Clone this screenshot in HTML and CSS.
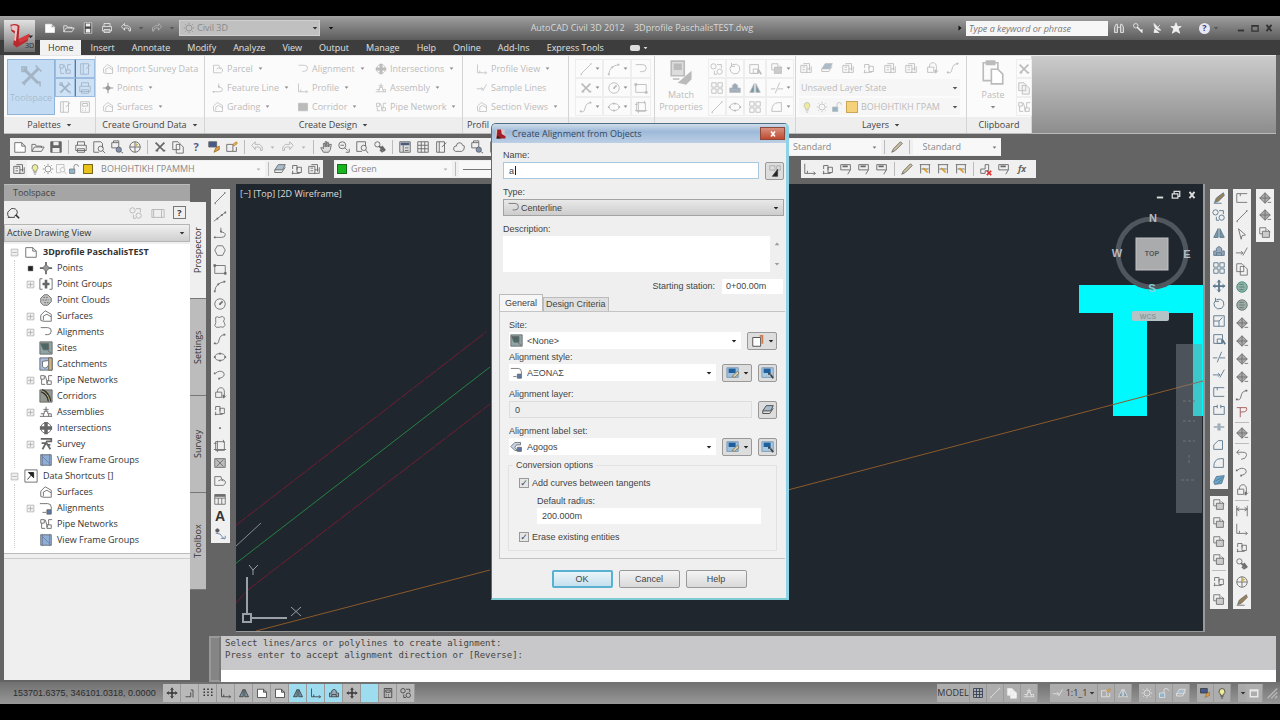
FILE: index.html
```html
<!DOCTYPE html>
<html lang="en">
<head>
<meta charset="utf-8">
<title>AutoCAD Civil 3D 2012</title>
<link rel="stylesheet" href="styles.css">
</head>
<body>
<svg class="sprite" aria-hidden="true">
  <symbol id="new" viewBox="0 0 16 16"><path d="M2 3h8l4 4v7H2zM10 3v4h4" fill="#fff"/></symbol>
  <symbol id="open" viewBox="0 0 16 16"><path d="M1 13V5h4l1 2h6v2M1 13l3-5h11l-3 5z"/></symbol>
  <symbol id="save" viewBox="0 0 16 16"><path d="M2 2h12v12H2z" fill="currentColor"/><path d="M5 2h6v4H5zM4 9h8v5H4z" fill="#eee" stroke="none"/></symbol>
  <symbol id="qsave" viewBox="0 0 16 16"><path d="M3 1h10v14H3z" fill="#444" stroke="#ddd"/><path d="M5 2h6v4H5zM5 9h6v5H5z" fill="#eee" stroke="none"/></symbol>
  <symbol id="print" viewBox="0 0 16 16"><path d="M4 6V2h8v4M2 6h12v6H2zM4 10h8v4H4z"/></symbol>
  <symbol id="preview" viewBox="0 0 16 16"><path d="M2 2h8l2 2v5M2 2v12h6"/><circle cx="10" cy="10" r="3"/><path d="M12 12l3 3"/></symbol>
  <symbol id="publish" viewBox="0 0 16 16"><path d="M2 3h8v6H2zM4 3V1h6v2"/><circle cx="10" cy="11" r="3" fill="#7f93b5"/><path d="M12 13l3 2"/></symbol>
  <symbol id="globe" viewBox="0 0 16 16"><circle cx="8" cy="8" r="6"/><path d="M8 2v12M2 8h12"/><path d="M8 8V3l4 2z" fill="#c9b45c" stroke="none"/></symbol>
  <symbol id="cut" viewBox="0 0 16 16"><path d="M3 3l9 9M13 3l-9 9M3 12h3M11 12h3" stroke-width="2"/></symbol>
  <symbol id="copy" viewBox="0 0 16 16"><path d="M2 2h6l2 2v7H2zM6 5h5l3 3v7H6z" fill="#f4f4f4"/></symbol>
  <symbol id="brush" viewBox="0 0 16 16"><path d="M2 2h9v6H2z" fill="#44598c"/><path d="M8 14l2-5 4-2v4z" fill="#d6a04b" stroke="#a5702c"/></symbol>
  <symbol id="edit" viewBox="0 0 16 16"><path d="M2 5h7v8H2zM9 13h4V8"/><path d="M9 5l4-3 1 2-4 3z" fill="#e3b450" stroke="#b98535"/></symbol>
  <symbol id="undo" viewBox="0 0 16 16"><path d="M2 6l4-4v3h5l3 3v4h-2V9l-2-1H6v3z"/></symbol>
  <symbol id="redo" viewBox="0 0 16 16"><path d="M14 6l-4-4v3H5L2 8v4h2V9l2-1h4v3z"/></symbol>
  <symbol id="hand" viewBox="0 0 16 16"><path d="M5 14L2 9l1-1 2 2V4h2v4-6h2v6-5h2v5l1-3h2l-1 6-2 3z" fill="#ddd"/></symbol>
  <symbol id="zoom" viewBox="0 0 16 16"><circle cx="6" cy="6" r="4"/><path d="M9 9l3 3M10 14h4v-4M4 6h4"/></symbol>
  <symbol id="zoomwin" viewBox="0 0 16 16"><path d="M8 13H2V2h10v5"/><circle cx="10" cy="9" r="3"/><path d="M12 11l3 4"/></symbol>
  <symbol id="find" viewBox="0 0 16 16"><path d="M4 13q-3-2-2-6l4-4q6-1 7 4 0 4-4 5M2 13h8"/><path d="M11 10l4 4" stroke-width="2"/></symbol>
  <symbol id="zoomprev" viewBox="0 0 16 16"><circle cx="5" cy="5" r="3"/><path d="M7 7l6 6M10 7l4 5M8 11l3 3" stroke-width="2"/></symbol>
  <symbol id="palette" viewBox="0 0 16 16"><path d="M2 2h12v12H2z" fill="#ddd"/><path d="M3 3h10v3H3z" fill="#4b5b7c" stroke="none"/><path d="M6 6v8M8 9h4M8 12h4"/></symbol>
  <symbol id="panel" viewBox="0 0 16 16"><path d="M1 4h14v9H1zM3 4v9M12 4v9"/></symbol>
  <symbol id="grid" viewBox="0 0 16 16"><path d="M2 2h12v12H2zM2 6h12M2 10h12M6 2v12M10 2v12"/></symbol>
  <symbol id="book" viewBox="0 0 16 16"><path d="M3 2h9v12H3zM6 2v12M9 8l5-5"/></symbol>
  <symbol id="cloud" viewBox="0 0 16 16"><path d="M4 13q-3-1-2-4 1-3 3-2 0-4 4-4 3 1 3 3 3 0 2 3 0 3-3 4z"/></symbol>
  <symbol id="revcloud" viewBox="0 0 16 16"><path d="M3 5q-1-3 2-3 2 2 4 0 4-1 4 3-2 2 0 4 2 4-2 5-2-1-4 0-4 1-5-2 2-3 1-7z"/></symbol>
  <symbol id="calc" viewBox="0 0 16 16"><path d="M3 2h10v12H3zM5 4h6v3H5zM5 10h1M8 10h1M11 10h0M5 12h1M8 12h1"/></symbol>
  <symbol id="layers" viewBox="0 0 16 16"><path d="M2 5h7v8H2zM5 3h7v8M8 13h6V6M9 9h4M4 7h3M4 10h3"/></symbol>
  <symbol id="bulb" viewBox="0 0 16 16"><path d="M6 11q0-2-2-4 0-5 4-5t4 5q-2 2-2 4z" fill="#eeeb9a"/><path d="M6 13h4M7 15h2"/></symbol>
  <symbol id="sun" viewBox="0 0 16 16"><circle cx="8" cy="8" r="4"/><path d="M8 1v2M8 13v2M1 8h2M13 8h2M3 3l1 1M12 12l1 1M13 3l-1 1M3 13l1-1"/></symbol>
  <symbol id="lock" viewBox="0 0 16 16"><path d="M2 8h7v6H2z" fill="#8fb4cc"/><path d="M8 8V4q0-2 3-2t3 3"/></symbol>
  <symbol id="layerset" viewBox="0 0 16 16"><path d="M2 9l4-6h8l-3 6z" fill="#a8bccb"/><path d="M2 12h8l4-6M2 9v3"/></symbol>
  <symbol id="line" viewBox="0 0 16 16"><path d="M2 14L14 2"/><path d="M2 14h1M13 2h1" stroke-width="2"/></symbol>
  <symbol id="xline" viewBox="0 0 16 16"><path d="M1 14L15 3"/><path d="M4 11h2M9 7h2M13 4h2" stroke-width="2"/></symbol>
  <symbol id="pline" viewBox="0 0 16 16"><path d="M2 13h8q4 0 4-3t-5-3M9 2v5"/><path d="M2 12v2M8 6h2" stroke-width="2"/></symbol>
  <symbol id="polygon" viewBox="0 0 16 16"><path d="M5 2h6l3 5-3 6H5L2 7z"/></symbol>
  <symbol id="rect" viewBox="0 0 16 16"><path d="M2 4h12v9H2z"/><path d="M1 3h2v2H1zM13 12h2v2h-2z" fill="currentColor"/></symbol>
  <symbol id="arc" viewBox="0 0 16 16"><path d="M2 14q1-10 12-11"/><path d="M2 13v2M5 6h2M12 3h2" stroke-width="2"/></symbol>
  <symbol id="circle" viewBox="0 0 16 16"><circle cx="8" cy="8" r="6"/><path d="M8 8l3-3M7 8h2" stroke-width="2"/></symbol>
  <symbol id="spline" viewBox="0 0 16 16"><path d="M2 13q4 2 5-4t7-6"/><path d="M2 12v2M12 3h2" stroke-width="2"/></symbol>
  <symbol id="ellipse" viewBox="0 0 16 16"><ellipse cx="8" cy="8" rx="6" ry="4"/><path d="M8 3v2M1 8h2M13 8h2M8 11v2" stroke-width="2"/></symbol>
  <symbol id="earc" viewBox="0 0 16 16"><path d="M3 6q4-4 9-1 3 5-5 7"/><path d="M2 5v2M7 11v2" stroke-width="2"/></symbol>
  <symbol id="insert" viewBox="0 0 16 16"><path d="M3 7h7v6H3zM5 7q0-5 4-5t4 5v6l2-2"/><path d="M12 10v4" stroke-width="2"/></symbol>
  <symbol id="block" viewBox="0 0 16 16"><path d="M3 8V4h5v5M8 6h5v6H8zM2 13h9M3 10v4"/></symbol>
  <symbol id="dot" viewBox="0 0 16 16"><path d="M7 8h2" stroke-width="2"/></symbol>
  <symbol id="hatch" viewBox="0 0 16 16"><path d="M3 3h10v10H3zM1 5h3M12 1v3M1 12h14M5 15V2"/></symbol>
  <symbol id="gradient" viewBox="0 0 16 16"><path d="M2 3h12v10H2z" fill="#bbb"/><path d="M4 4l8 8M12 4l-8 8"/></symbol>
  <symbol id="region" viewBox="0 0 16 16"><path d="M2 13V3h7l1 3q5 1 4 5-2 3-5 2zM6 8q3-3 6 0"/></symbol>
  <symbol id="table" viewBox="0 0 16 16"><path d="M2 3h12v11H2zM2 7h12M6 7v7M10 7v7"/><path d="M2 4h12" stroke-width="3"/></symbol>
  <symbol id="addsel" viewBox="0 0 16 16"><circle cx="5" cy="4" r="2" fill="#555"/><path d="M3 7l5 1M8 8l5 6M9 13h5v-3" stroke="#647da7"/></symbol>
  <symbol id="erase" viewBox="0 0 16 16"><path d="M3 13l2-5 8-6 1 3-7 7z" fill="#9a8055"/><path d="M2 14h9"/></symbol>
  <symbol id="copyobj" viewBox="0 0 16 16"><circle cx="4" cy="5" r="3"/><circle cx="11" cy="11" r="3"/><path d="M8 3h5v4M5 10v4h3"/></symbol>
  <symbol id="mirror" viewBox="0 0 16 16"><path d="M7 3v10H2zM9 3v10h5z" fill="#7898a8"/></symbol>
  <symbol id="offset" viewBox="0 0 16 16"><path d="M2 13V8h3V5q3-4 6 0v3h3v5zM5 13v-3h6v3" fill="#9ab"/></symbol>
  <symbol id="array" viewBox="0 0 16 16"><path d="M2 2h5v5H2zM9 2h5v5H9zM2 9h5v5H2zM9 9h5v5H9z"/></symbol>
  <symbol id="move" viewBox="0 0 16 16"><path d="M8 2v12M2 8h12" stroke-width="2"/><path d="M6 4l2-3 2 3M6 12l2 3 2-3M4 6L1 8l3 2M12 6l3 2-3 2"/></symbol>
  <symbol id="rotate" viewBox="0 0 16 16"><path d="M5 3q5-2 8 2 2 5-2 8-5 2-8-2-2-4 1-7"/><path d="M4 1v4h4"/></symbol>
  <symbol id="scale" viewBox="0 0 16 16"><path d="M2 2h12v12H2zM2 8h6v6M8 8l4-4"/></symbol>
  <symbol id="stretch" viewBox="0 0 16 16"><path d="M2 3h10v10H2zM6 8h5v5H6z"/><path d="M12 9l3 5" stroke-width="2"/></symbol>
  <symbol id="trim" viewBox="0 0 16 16"><path d="M1 9h5M9 9h6M6 14l5-12"/></symbol>
  <symbol id="extend" viewBox="0 0 16 16"><path d="M1 9h8M9 12l5-9M7 7l2 2-2 2"/></symbol>
  <symbol id="break" viewBox="0 0 16 16"><path d="M14 3H2v10h12M6 3v3"/></symbol>
  <symbol id="break2" viewBox="0 0 16 16"><path d="M6 4H2v9h12V4h-4M6 2v4M10 2v4"/></symbol>
  <symbol id="join" viewBox="0 0 16 16"><path d="M2 8h4M10 8h4M7 4v8M9 4v8"/></symbol>
  <symbol id="chamfer" viewBox="0 0 16 16"><path d="M2 13V8l5-5h5v10z"/></symbol>
  <symbol id="fillet" viewBox="0 0 16 16"><path d="M2 13q0-10 8-10h3v10z"/></symbol>
  <symbol id="explode" viewBox="0 0 16 16"><path d="M2 10l3-6 9-1-3 9-8 1z" fill="#69a9cc"/><path d="M4 9l8-4M6 12l6-5"/></symbol>
  <symbol id="order" viewBox="0 0 16 16"><path d="M2 2h7v7H2z"/><path d="M5 6h8v7H5z" fill="#ccc"/><path d="M11 4l3 3"/></symbol>
  <symbol id="pointer" viewBox="0 0 16 16"><path d="M4 2l8 7-4 1-1 4z"/></symbol>
  <symbol id="gem" viewBox="0 0 16 16"><path d="M8 2l6 6-6 6-6-6z" fill="#aaa"/><path d="M8 2v12M2 8h12M11 13h4"/></symbol>
  <symbol id="ball" viewBox="0 0 16 16"><circle cx="8" cy="8" r="6" fill="#9aaea8"/><path d="M5 5h5M5 8h6M5 11h5"/></symbol>
  <symbol id="ptcloud" viewBox="0 0 16 16"><path d="M2 11V6l4-4h4l4 4v4l-4 4H5z" fill="#c4c4c4"/><path d="M5 5h5M4 8h7M6 11h5" stroke-dasharray="2 1"/></symbol>
  <symbol id="hook" viewBox="0 0 16 16"><path d="M5 3L2 6l3 3M2 6h7q5 0 4 4t-6 4"/></symbol>
  <symbol id="pflag" viewBox="0 0 16 16"><path d="M2 3h11q2 5-5 5H6M6 3v11"/></symbol>
  <symbol id="snap" viewBox="0 0 16 16"><path d="M2 13h7V7M12 14V4h-3"/></symbol>
  <symbol id="dotgrid" viewBox="0 0 16 16"><path d="M2 3h12M2 7h12M2 11h12" stroke-dasharray="2 3" stroke-width="2"/></symbol>
  <symbol id="dim" viewBox="0 0 16 16"><path d="M2 2v12M14 2v12M2 6h12M5 4L2 6l3 2M11 4l3 2-3 2"/></symbol>
  <symbol id="dimcorner" viewBox="0 0 16 16"><path d="M2 2v11h12M5 10v3M12 11l2 2-2 2"/></symbol>
  <symbol id="flagdim" viewBox="0 0 16 16"><path d="M2 3h11v6H2zM13 9l-3 5"/><path d="M4 5h6" stroke-width="2"/></symbol>
  <symbol id="gold" viewBox="0 0 16 16"><path d="M2 3h12M3 3v10M13 3v10M4 8h8"/><path d="M6 7l5 5" stroke="#d99d25" stroke-width="2"/></symbol>
  <symbol id="redx" viewBox="0 0 16 16"><path d="M2 13V8h5V3h4v7H7v3z"/><path d="M9 10l5 5M14 10l-5 5" stroke="#d33" stroke-width="2"/></symbol>
  <symbol id="points" viewBox="0 0 16 16"><path d="M8 1v14M1 8h14" stroke-width="2"/><path d="M8 4l4 4-4 4-4-4z" fill="#999"/></symbol>
  <symbol id="pgroups" viewBox="0 0 16 16"><path d="M4 2H1v12h3M12 2h3v12h-3"/><path d="M8 3v10M4 8h8" stroke-width="3"/></symbol>
  <symbol id="surface" viewBox="0 0 16 16"><path d="M2 13V7l5-5 7 4v8H5zM5 13V8l4-2 5 3"/></symbol>
  <symbol id="align" viewBox="0 0 16 16"><path d="M2 3h8q4 0 4 4t-4 4H7"/></symbol>
  <symbol id="site" viewBox="0 0 16 16"><path d="M1 1h14v14H1z" fill="#8fa4a5"/><path d="M2 3h9v7H5zM10 11l4 3" fill="#4d6767"/></symbol>
  <symbol id="catch" viewBox="0 0 16 16"><path d="M1 1h14v14H1z" fill="#a9bee2"/><path d="M11 1h4v14h-4z" fill="#d2b578"/><path d="M4 5v6q4 4 7-2V4z" fill="#fff"/></symbol>
  <symbol id="pipe" viewBox="0 0 16 16"><path d="M2 3h4v4H2zM3 7v6h4M9 13h5V9H9zM11 9V3h4M7 3l3 9"/></symbol>
  <symbol id="corridor" viewBox="0 0 16 16"><path d="M1 1h14v14H1z" fill="#93998f"/><path d="M3 2q8 3 9 12" stroke="#333" stroke-width="4"/><path d="M3 2q8 3 9 12" stroke="#dcd58a"/></symbol>
  <symbol id="assembly" viewBox="0 0 16 16"><path d="M1 13h14M2 10h4V7h4v3h4v3M8 2v6M5 5h6M5 10v3M11 10v3"/></symbol>
  <symbol id="intersect" viewBox="0 0 16 16"><circle cx="8" cy="8" r="6"/><path d="M8 1v14M1 8h14" stroke-width="4"/></symbol>
  <symbol id="survey" viewBox="0 0 16 16"><path d="M2 2h12v3H9L4 14M8 6l5 8M3 7h5M9 9h4" stroke-width="2"/></symbol>
  <symbol id="vframe" viewBox="0 0 16 16"><path d="M2 2h12v12H2z" fill="#8faed6"/><path d="M2 2l12 12M4 1v14M12 1v14" stroke="#6d84a8"/></symbol>
  <symbol id="shortcut" viewBox="0 0 16 16"><path d="M1 1h14v14H1z" fill="#fff"/><path d="M5 4h6v6zM4 12l5-6" fill="#222" stroke="#222"/></symbol>
  <symbol id="down" viewBox="0 0 16 16"><path d="M2 5h12l-6 7z" fill="currentColor" stroke="none"/></symbol>
  <symbol id="up" viewBox="0 0 16 16"><path d="M2 11h12L8 4z" fill="currentColor" stroke="none"/></symbol>
  <symbol id="right" viewBox="0 0 16 16"><path d="M4 1v14l8-7z" fill="currentColor" stroke="none"/></symbol>
  <symbol id="plus" viewBox="0 0 16 16"><path d="M2 2h12v12H2z" fill="#eee"/><path d="M4 8h8M8 4v8"/></symbol>
  <symbol id="minus" viewBox="0 0 16 16"><path d="M2 2h12v12H2z" fill="#eee"/><path d="M4 8h8"/></symbol>
  <symbol id="stop" viewBox="0 0 16 16"><path d="M4 4h8v8H4z" fill="#222" stroke="#222"/></symbol>
  <symbol id="binoc" viewBox="0 0 16 16"><path d="M2 14V7l2-4h2v11zM10 14V3h2l2 4v7zM6 7h4" fill="#999"/></symbol>
  <symbol id="key" viewBox="0 0 16 16"><circle cx="5" cy="5" r="3"/><path d="M7 7l7 7M12 12l2-2" stroke-width="2"/></symbol>
  <symbol id="dish" viewBox="0 0 16 16"><path d="M4 2q0 9 9 9zM9 7l3-3M5 9l-1 5h7" fill="currentColor"/></symbol>
  <symbol id="star" viewBox="0 0 16 16"><path d="M8 1l2 5h5l-4 3 2 6-5-3-5 3 2-6-4-3h5z" fill="currentColor"/></symbol>
  <symbol id="min" viewBox="0 0 16 16"><path d="M3 12h10" stroke-width="3"/></symbol>
  <symbol id="max" viewBox="0 0 16 16"><path d="M3 4h10v9H3zM3 5h10" stroke-width="2"/></symbol>
  <symbol id="restore" viewBox="0 0 16 16"><path d="M5 5V2h9v8h-3M2 6h9v7H2z" stroke-width="2"/></symbol>
  <symbol id="close" viewBox="0 0 16 16"><path d="M4 3l8 10M12 3L4 13" stroke-width="3"/></symbol>
  <symbol id="tools" viewBox="0 0 16 16"><path d="M3 3l10 10M13 3L3 13" stroke-width="2"/><path d="M2 2h3v3H2zM11 1l4 4M2 12l2 2M11 12h3v3"/></symbol>
  <symbol id="match" viewBox="0 0 16 16"><path d="M2 1h8v9H2z" fill="#ddd"/><path d="M4 3h4v3H4zM3 12h4M7 14l7-6v4l-3 3z" fill="#bbb"/></symbol>
  <symbol id="paste" viewBox="0 0 16 16"><path d="M2 2h9v11H2zM4 1h5v2H4z"/><path d="M7 6h4l3 3v6H7z" fill="#fff"/></symbol>
  <symbol id="stylebtn" viewBox="0 0 16 16"><path d="M1 2h13v11H1z" fill="#9dc0dd" stroke="#7895b2"/><path d="M3 3h8v5H3z" fill="#1f5f9e" stroke="none"/><path d="M7 12l6-6 2 2-5 5z" fill="#e3cf9a" stroke="#777"/></symbol>
  <symbol id="stylepick" viewBox="0 0 16 16"><path d="M1 2h13v11H1z" fill="#a7c9e2" stroke="#7895b2"/><path d="M3 3h8v5H3z" fill="#1f5f9e" stroke="none"/><path d="M8 9h3M11 10l3 4" stroke-width="2"/></symbol>
  <symbol id="newsite" viewBox="0 0 16 16"><path d="M2 4h9v10H2z" fill="#fff"/><path d="M10 2h3v7M13 9v2" stroke="#d07a48" stroke-width="2"/></symbol>
  <symbol id="namepick" viewBox="0 0 16 16"><path d="M2 2h6v5H2zM10 2h4v5h-4z" stroke="#aaa"/><path d="M5 14l6-8v8z" fill="#222"/></symbol>
  <symbol id="labelset" viewBox="0 0 16 16"><path d="M1 8l5-5h7v3H8l-2 3 3 4H6z" fill="#c5d4e6"/><path d="M9 9h5v5H9z" fill="#5a77a8"/></symbol>
  <symbol id="alignstyle" viewBox="0 0 16 16"><path d="M1 3h9q4 0 4 4v3M4 13h4"/><path d="M9 10h5v5H9z" fill="#5a77a8"/></symbol>
  <symbol id="pencil" viewBox="0 0 16 16"><path d="M2 14l2-4 8-8 2 2-8 8z" fill="#cdbf9a"/></symbol>
  <symbol id="resize" viewBox="0 0 16 16"><path d="M2 15L15 2M7 15l8-8M12 15l3-3" stroke-width="2"/></symbol>
</svg>

<main class="app">
  <header class="head">
    <button class="appbtn" aria-label="Application menu">
      <svg class="logo" viewBox="0 0 32 32"><path d="M6 3q7-2 10 1l-1 15 12-6-2 8-12 7-4-3 2-12-4-3z" fill="#b92a2e"/><path d="M7 4q5-1 7 1l-2 16-2-1 1-10-4-2z" fill="#e9c6c6"/><path d="M15 19l12-6-2 6-9 4z" fill="#d7373b"/><path d="M26 15h5l-3 3z" fill="#222"/><text x="22" y="29">3D</text></svg>
    </button>
    <div class="titlebar">
      <div class="quick">
        <button aria-label="New"><svg><use href="#new"/></svg></button>
        <button aria-label="Open"><svg><use href="#open"/></svg></button>
        <button aria-label="Save"><svg><use href="#qsave"/></svg></button>
        <button aria-label="Plot"><svg><use href="#print"/></svg></button>
        <button aria-label="Undo"><svg><use href="#undo"/></svg></button>
        <svg class="car"><use href="#down"/></svg>
        <button class="dim" aria-label="Redo"><svg><use href="#redo"/></svg></button>
        <svg class="car"><use href="#down"/></svg>
        <div class="wspace"><svg><use href="#sun"/></svg><select aria-label="Workspace"><option>Civil 3D</option></select><svg class="car"><use href="#down"/></svg></div>
        <svg class="car black"><use href="#down"/></svg>
      </div>
      <h1 class="apptitle">AutoCAD Civil 3D 2012 &nbsp; &nbsp;3Dprofile PaschalisTEST.dwg</h1>
      <div class="info">
        <svg class="car black"><use href="#right"/></svg>
        <input type="text" class="search" placeholder="Type a keyword or phrase" aria-label="Search">
        <button aria-label="Find"><svg><use href="#binoc"/></svg></button>
        <button aria-label="Subscription"><svg><use href="#key"/></svg></button>
        <button aria-label="Communication"><svg><use href="#dish"/></svg></button>
        <button aria-label="Favorites"><svg><use href="#star"/></svg></button>
        <button class="helpbtn" aria-label="Help">?</button>
        <svg class="car"><use href="#down"/></svg>
        <div class="winbtns">
          <button aria-label="Minimize"><svg><use href="#min"/></svg></button>
          <button aria-label="Maximize"><svg><use href="#max"/></svg></button>
          <button aria-label="Close"><svg><use href="#close"/></svg></button>
        </div>
      </div>
    </div>
    <nav class="menu">
      <button class="on">Home</button><button>Insert</button><button>Annotate</button><button>Modify</button><button>Analyze</button><button>View</button><button>Output</button><button>Manage</button><button>Help</button><button>Online</button><button>Add-Ins</button><button>Express Tools</button>
      <button class="mini" aria-label="Ribbon state"><i class="pill"></i><svg class="car"><use href="#down"/></svg></button>
    </nav>
  </header>

  <section class="ribbon">
    <div class="panel p-pal">
      <div class="body">
        <button class="tspace"><svg><use href="#tools"/></svg><span>Toolspace</span></button>
        <div class="pal">
          <button class="sel" aria-label="Prospector"><svg><use href="#pipe"/></svg></button><button class="sel" aria-label="Properties"><svg><use href="#book"/></svg></button>
          <button class="sel" aria-label="Settings"><svg><use href="#tools"/></svg></button><button class="sel" aria-label="Toolbox"><svg><use href="#print"/></svg></button>
          <button aria-label="Palette"><svg><use href="#book"/></svg></button><button aria-label="Sheet set"><svg><use href="#calc"/></svg></button>
        </div>
      </div>
      <button class="ptitle">Palettes <svg class="car"><use href="#down"/></svg></button>
    </div>
    <div class="panel p-gnd">
      <div class="body cols"><div class="col">
        <button><svg><use href="#surface"/></svg>Import Survey Data</button>
        <button><svg><use href="#points"/></svg>Points <svg class="car"><use href="#down"/></svg></button>
        <button><svg><use href="#surface"/></svg>Surfaces <svg class="car"><use href="#down"/></svg></button>
      </div></div>
      <button class="ptitle">Create Ground Data <svg class="car"><use href="#down"/></svg></button>
    </div>
    <div class="panel p-des">
      <div class="body cols"><div class="col c1">
        <button><svg><use href="#region"/></svg>Parcel <svg class="car"><use href="#down"/></svg></button>
        <button><svg><use href="#pline"/></svg>Feature Line <svg class="car"><use href="#down"/></svg></button>
        <button><svg><use href="#surface"/></svg>Grading <svg class="car"><use href="#down"/></svg></button>
      </div><div class="col c2">
        <button><svg><use href="#align"/></svg>Alignment <svg class="car"><use href="#down"/></svg></button>
        <button><svg><use href="#dimcorner"/></svg>Profile <svg class="car"><use href="#down"/></svg></button>
        <button><svg><use href="#gradient"/></svg>Corridor <svg class="car"><use href="#down"/></svg></button>
      </div><div class="col">
        <button><svg><use href="#intersect"/></svg>Intersections <svg class="car"><use href="#down"/></svg></button>
        <button><svg><use href="#assembly"/></svg>Assembly <svg class="car"><use href="#down"/></svg></button>
        <button><svg><use href="#pipe"/></svg>Pipe Network <svg class="car"><use href="#down"/></svg></button>
      </div></div>
      <button class="ptitle">Create Design <svg class="car"><use href="#down"/></svg></button>
    </div>
    <div class="panel p-prf">
      <div class="body cols"><div class="col">
        <button><svg><use href="#dimcorner"/></svg>Profile View <svg class="car"><use href="#down"/></svg></button>
        <button><svg><use href="#extend"/></svg>Sample Lines</button>
        <button><svg><use href="#surface"/></svg>Section Views <svg class="car"><use href="#down"/></svg></button>
      </div></div>
      <button class="ptitle left">Profil</button>
    </div>
    <div class="panel p-drw">
      <div class="body g3">
        <button aria-label="Line"><svg><use href="#line"/></svg><svg class="car"><use href="#down"/></svg></button><button aria-label="Arc"><svg><use href="#arc"/></svg><svg class="car"><use href="#down"/></svg></button><button aria-label="Polyline"><svg><use href="#align"/></svg></button>
        <button aria-label="Trim"><svg><use href="#cut"/></svg><svg class="car"><use href="#down"/></svg></button><button aria-label="Circle"><svg><use href="#circle"/></svg><svg class="car"><use href="#down"/></svg></button><button aria-label="Rectangle"><svg><use href="#rect"/></svg></button>
        <button aria-label="Curve"><svg><use href="#spline"/></svg><svg class="car"><use href="#down"/></svg></button><button aria-label="Ellipse"><svg><use href="#ellipse"/></svg><svg class="car"><use href="#down"/></svg></button><button aria-label="Hatch"><svg><use href="#hatch"/></svg></button>
      </div>
      <div class="ptitle"></div>
    </div>
    <div class="panel p-mod">
      <div class="body">
        <button class="big"><svg><use href="#match"/></svg><span>Match</span><span>Properties</span></button>
        <div class="g4">
          <button aria-label="Copy"><svg><use href="#copyobj"/></svg></button><button aria-label="Rotate"><svg><use href="#rotate"/></svg></button><button aria-label="Stretch"><svg><use href="#stretch"/></svg></button><button aria-label="Order"><svg><use href="#order"/></svg><svg class="car"><use href="#down"/></svg></button>
          <button aria-label="Array"><svg><use href="#array"/></svg></button><button aria-label="Offset"><svg><use href="#offset"/></svg></button><button aria-label="Mirror"><svg><use href="#mirror"/></svg></button><button aria-label="Trim"><svg><use href="#trim"/></svg><svg class="car"><use href="#down"/></svg></button>
          <button aria-label="Erase"><svg><use href="#line"/></svg></button><button aria-label="Explode"><svg><use href="#ellipse"/></svg></button><button aria-label="Grid"><svg><use href="#array"/></svg></button><button aria-label="Fillet"><svg><use href="#fillet"/></svg><svg class="car"><use href="#down"/></svg></button>
        </div>
      </div>
      <div class="ptitle"></div>
    </div>
    <div class="panel p-lay">
      <div class="body stack">
        <div class="licons"><button aria-label="Layer properties"><svg><use href="#layers"/></svg></button><button aria-label="Make current"><svg><use href="#layerset"/></svg></button><button aria-label="Match layer"><svg><use href="#layers"/></svg></button><button aria-label="Previous layer"><svg><use href="#block"/></svg></button><button aria-label="Isolate"><svg><use href="#layers"/></svg></button><button aria-label="Unisolate"><svg><use href="#layers"/></svg></button><button aria-label="Freeze"><svg><use href="#insert"/></svg></button><button aria-label="Off"><svg><use href="#spline"/></svg></button></div>
        <div class="rcombo"><select aria-label="Layer state"><option>Unsaved Layer State</option></select><svg class="car"><use href="#down"/></svg></div>
        <div class="rcombo"><svg><use href="#bulb"/></svg><svg><use href="#sun"/></svg><svg><use href="#lock"/></svg><i class="sw amber"></i><select aria-label="Layer"><option>ΒΟΗΘΗΤΙΚΗ ΓΡΑΜ</option></select><svg class="car"><use href="#down"/></svg></div>
      </div>
      <button class="ptitle">Layers <svg class="car"><use href="#down"/></svg></button>
    </div>
    <div class="panel p-clp">
      <div class="body">
        <button class="big"><svg><use href="#paste"/></svg><span>Paste</span><svg class="car"><use href="#down"/></svg></button>
        <div class="g1"><button aria-label="Cut"><svg><use href="#cut"/></svg></button><button aria-label="Copy"><svg><use href="#copy"/></svg></button><button aria-label="Paste special"><svg><use href="#pipe"/></svg></button></div>
      </div>
      <div class="ptitle">Clipboard</div>
    </div>
  </section>

  <section class="bars">
    <div class="barrow">
      <div class="bar b-std">
        <button aria-label="New"><svg><use href="#new"/></svg></button><button aria-label="Open"><svg><use href="#open"/></svg></button><button aria-label="Save"><svg><use href="#save"/></svg></button><i class="sep"></i>
        <button aria-label="Plot"><svg><use href="#print"/></svg></button><button aria-label="Preview"><svg><use href="#preview"/></svg></button><button aria-label="Publish"><svg><use href="#publish"/></svg></button><button aria-label="Globe"><svg><use href="#globe"/></svg></button><i class="sep"></i>
        <button aria-label="Cut"><svg><use href="#cut"/></svg></button><button aria-label="Copy"><svg><use href="#copy"/></svg></button><button class="q" aria-label="Help">?</button><button aria-label="Match"><svg><use href="#brush"/></svg></button><button aria-label="Block editor"><svg><use href="#edit"/></svg></button><i class="sep"></i>
        <button class="off" aria-label="Undo"><svg><use href="#undo"/></svg></button><svg class="car off"><use href="#down"/></svg><button class="off" aria-label="Redo"><svg><use href="#redo"/></svg></button><svg class="car off"><use href="#down"/></svg><i class="sep"></i>
        <button aria-label="Pan"><svg><use href="#hand"/></svg></button><button aria-label="Zoom"><svg><use href="#zoom"/></svg></button><button aria-label="Zoom window"><svg><use href="#zoomwin"/></svg></button><button aria-label="Zoom previous"><svg><use href="#zoomprev"/></svg></button><i class="sep"></i>
        <button aria-label="Properties"><svg><use href="#palette"/></svg></button><button aria-label="Design center"><svg><use href="#grid"/></svg></button><button aria-label="Tool palettes"><svg><use href="#book"/></svg></button><button aria-label="Sheet set"><svg><use href="#cloud"/></svg></button><button aria-label="Markup"><svg><use href="#publish"/></svg></button><button aria-label="Calculator"><svg><use href="#calc"/></svg></button>
      </div>
      <div class="bar b-sty">
        <div class="tcombo st1"><select aria-label="Text style"><option>Standard</option></select><svg class="car"><use href="#down"/></svg></div><i class="sep"></i><button aria-label="Style"><svg><use href="#pencil"/></svg></button><i class="sep"></i>
        <div class="tcombo st2"><select aria-label="Table style"><option>Standard</option></select><svg class="car"><use href="#down"/></svg></div>
      </div>
    </div>
    <div class="barrow">
      <div class="bar b-lay">
        <button aria-label="Layer manager"><svg><use href="#layers"/></svg></button>
        <div class="tcombo lay"><svg><use href="#bulb"/></svg><svg><use href="#sun"/></svg><svg class="off"><use href="#zoomwin"/></svg><svg><use href="#lock"/></svg><i class="sw yellow"></i><select aria-label="Layer"><option>ΒΟΗΘΗΤΙΚΗ ΓΡΑΜΜΗ</option></select><svg class="car off"><use href="#down"/></svg></div><i class="sep"></i>
        <button aria-label="Make current"><svg><use href="#layerset"/></svg></button><button aria-label="Previous layer"><svg><use href="#block"/></svg></button><button aria-label="Layer states"><svg><use href="#layers"/></svg></button>
      </div>
      <div class="bar b-prp">
        <div class="tcombo colr"><i class="sw green"></i><select aria-label="Color"><option>Green</option></select><svg class="car off"><use href="#down"/></svg></div><i class="sep"></i>
        <div class="tcombo"><i class="ltype"></i></div>
      </div>
      <div class="bar b-dim">
        <button aria-label="UCS"><svg><use href="#dimcorner"/></svg></button><button aria-label="Add label"><svg><use href="#block"/></svg></button><button aria-label="Flag label"><svg><use href="#flagdim"/></svg></button><button aria-label="Edit label"><svg><use href="#flagdim"/></svg></button><button aria-label="Drag label"><svg><use href="#flagdim"/></svg></button><i class="sep"></i>
        <button aria-label="Pen"><svg><use href="#pencil"/></svg></button><button aria-label="Table one"><svg><use href="#gold"/></svg></button><button aria-label="Table two"><svg><use href="#gold"/></svg></button><button aria-label="Table three"><svg><use href="#gold"/></svg></button><i class="sep"></i>
        <button aria-label="Delete"><svg><use href="#redx"/></svg></button><button aria-label="Label"><svg><use href="#flagdim"/></svg></button><button class="fx">fx</button>
      </div>
    </div>
  </section>

  <section class="work">
    <aside class="toolspace">
      <div class="ts">
        <div class="tshead">Toolspace</div>
        <div class="tstools"><button aria-label="Find"><svg><use href="#find"/></svg></button><span class="grow"></span><button class="off" aria-label="Items"><svg><use href="#copyobj"/></svg></button><button class="off" aria-label="Panel"><svg><use href="#panel"/></svg></button><button class="thelp" aria-label="Help">?</button></div>
        <div class="tscombo"><select aria-label="View"><option>Active Drawing View</option></select><svg class="car"><use href="#down"/></svg></div>
        <ul class="tree">
          <li><div class="node root"><svg class="ex"><use href="#minus"/></svg><svg><use href="#new"/></svg><b>3Dprofile PaschalisTEST</b></div>
            <ul>
              <li class="node"><svg class="ex"><use href="#stop"/></svg><svg><use href="#points"/></svg>Points</li>
              <li class="node"><svg class="ex"><use href="#plus"/></svg><svg><use href="#pgroups"/></svg>Point Groups</li>
              <li class="node"><i class="ex"></i><svg><use href="#ptcloud"/></svg>Point Clouds</li>
              <li class="node"><svg class="ex"><use href="#plus"/></svg><svg><use href="#surface"/></svg>Surfaces</li>
              <li class="node"><svg class="ex"><use href="#plus"/></svg><svg><use href="#align"/></svg>Alignments</li>
              <li class="node"><i class="ex"></i><svg><use href="#site"/></svg>Sites</li>
              <li class="node"><i class="ex"></i><svg><use href="#catch"/></svg>Catchments</li>
              <li class="node"><svg class="ex"><use href="#plus"/></svg><svg><use href="#pipe"/></svg>Pipe Networks</li>
              <li class="node"><i class="ex"></i><svg><use href="#corridor"/></svg>Corridors</li>
              <li class="node"><svg class="ex"><use href="#plus"/></svg><svg><use href="#assembly"/></svg>Assemblies</li>
              <li class="node"><i class="ex"></i><svg><use href="#intersect"/></svg>Intersections</li>
              <li class="node"><svg class="ex"><use href="#plus"/></svg><svg><use href="#survey"/></svg>Survey</li>
              <li class="node"><i class="ex"></i><svg><use href="#vframe"/></svg>View Frame Groups</li>
            </ul>
          </li>
          <li><div class="node root"><svg class="ex"><use href="#minus"/></svg><svg><use href="#shortcut"/></svg>Data Shortcuts []</div>
            <ul>
              <li class="node"><i class="ex"></i><svg><use href="#surface"/></svg>Surfaces</li>
              <li class="node"><svg class="ex"><use href="#plus"/></svg><svg><use href="#alignstyle"/></svg>Alignments</li>
              <li class="node"><i class="ex"></i><svg><use href="#pipe"/></svg>Pipe Networks</li>
              <li class="node"><i class="ex"></i><svg><use href="#vframe"/></svg>View Frame Groups</li>
            </ul>
          </li>
        </ul>
        <div class="tslower"></div>
      </div>
      <div class="tstabs"><button class="on">Prospector</button><button>Settings</button><button>Survey</button><button>Toolbox</button></div>
    </aside>

    <div class="right">
      <div class="stage">
        <div class="vbar v-draw">
          <button aria-label="Line"><svg><use href="#line"/></svg></button><button aria-label="Construction line"><svg><use href="#xline"/></svg></button><button aria-label="Polyline"><svg><use href="#pline"/></svg></button><button aria-label="Polygon"><svg><use href="#polygon"/></svg></button><button aria-label="Rectangle"><svg><use href="#rect"/></svg></button><button aria-label="Arc"><svg><use href="#arc"/></svg></button><button aria-label="Circle"><svg><use href="#circle"/></svg></button><button aria-label="Revision cloud"><svg><use href="#revcloud"/></svg></button><button aria-label="Spline"><svg><use href="#spline"/></svg></button><button aria-label="Ellipse"><svg><use href="#ellipse"/></svg></button><button aria-label="Ellipse arc"><svg><use href="#earc"/></svg></button><button aria-label="Insert block"><svg><use href="#insert"/></svg></button><button aria-label="Make block"><svg><use href="#block"/></svg></button><button aria-label="Point"><svg><use href="#dot"/></svg></button><button aria-label="Hatch"><svg><use href="#hatch"/></svg></button><button aria-label="Gradient"><svg><use href="#gradient"/></svg></button><button aria-label="Region"><svg><use href="#region"/></svg></button><button aria-label="Table"><svg><use href="#table"/></svg></button><button class="mtext">A</button><button aria-label="Add selected"><svg><use href="#addsel"/></svg></button>
        </div>
        <div class="canvas">
          <svg class="drawing" viewBox="0 0 968 447" preserveAspectRatio="xMaxYMid slice">
            <path d="M844 101h124v28h-56v103h-34V129h-34zM958 129h10v103h-10z" fill="#00f9fc" stroke="none"/>
            <path d="M21 447L255 386M530 312L968 197" stroke="#8a5a2a"/>
            <path d="M0 342L251 148M0 420L14 405 255 220" stroke="#741c33" stroke-dasharray="14 1"/>
            <path d="M0 380L255 183" stroke="#238342"/>
            <path d="M0 363L26 339" stroke="#858b91"/>
            <g stroke="#99a0a7"><path d="M12 393v38M16 434h36M8 430h8v8H8z" stroke-width="2"/><path d="M14 381l4 5 5-5M18 386v5M56 423l10 9M66 423l-10 9"/></g>
            <rect x="941" y="160" width="26" height="169" fill="#858b91" fill-opacity=".45" stroke="none"/>
            <path d="M948 217h12M948 237h12M948 257h12M954 271v8M946 296h14" stroke="#6e757a" stroke-dasharray="3 2"/>
            <g class="cube">
              <circle cx="917" cy="69" r="34"/>
              <rect class="face" x="901" y="54" width="32" height="32"/>
              <text class="top" x="917" y="72">TOP</text>
              <text x="918" y="38">N</text><text x="882" y="73">W</text><text x="952" y="74">E</text><text class="south" x="917" y="108">S</text>
              <rect class="wcs" x="897" y="127" width="37" height="10" rx="2"/><text class="wcst" x="913" y="135">WCS</text>
            </g>
          </svg>
          <div class="vlabel">[−] [Top] [2D Wireframe]</div>
          <div class="vwin"><button aria-label="Minimize view"><svg><use href="#min"/></svg></button><button aria-label="Restore view"><svg><use href="#restore"/></svg></button><button aria-label="Close view"><svg><use href="#close"/></svg></button></div>
        </div>
        <div class="vcol">
          <div class="vbar v-mod">
            <button aria-label="Erase"><svg><use href="#erase"/></svg></button><button aria-label="Copy"><svg><use href="#copyobj"/></svg></button><button aria-label="Mirror"><svg><use href="#mirror"/></svg></button><button aria-label="Offset"><svg><use href="#offset"/></svg></button><button aria-label="Array"><svg><use href="#array"/></svg></button><button aria-label="Move"><svg><use href="#move"/></svg></button><button aria-label="Rotate"><svg><use href="#rotate"/></svg></button><button aria-label="Scale"><svg><use href="#scale"/></svg></button><button aria-label="Stretch"><svg><use href="#stretch"/></svg></button><button aria-label="Trim"><svg><use href="#trim"/></svg></button><button aria-label="Extend"><svg><use href="#extend"/></svg></button><button aria-label="Break at point"><svg><use href="#break"/></svg></button><button aria-label="Break"><svg><use href="#break2"/></svg></button><button aria-label="Join"><svg><use href="#join"/></svg></button><button aria-label="Chamfer"><svg><use href="#chamfer"/></svg></button><button aria-label="Fillet"><svg><use href="#fillet"/></svg></button><button aria-label="Explode"><svg><use href="#explode"/></svg></button>
          </div>
          <div class="vbar v-ord">
            <button aria-label="Bring to front"><svg><use href="#order"/></svg></button><button aria-label="Send to back"><svg><use href="#order"/></svg></button><button aria-label="Bring above"><svg><use href="#order"/></svg></button><button aria-label="Send under"><svg><use href="#order"/></svg></button><i class="hsep"></i><button aria-label="Text to front"><svg><use href="#block"/></svg></button><button aria-label="Hatch to back"><svg><use href="#order"/></svg></button>
          </div>
        </div>
        <div class="vbar v-geo">
          <button aria-label="Line by points"><svg><use href="#break"/></svg></button><button aria-label="Line by angle"><svg><use href="#line"/></svg></button><button aria-label="Select"><svg><use href="#pointer"/></svg></button><button aria-label="Tangent"><svg><use href="#extend"/></svg></button><button aria-label="Page"><svg><use href="#copy"/></svg></button><button class="teal" aria-label="World"><svg><use href="#ball"/></svg></button><button aria-label="Sphere"><svg><use href="#ball"/></svg></button><button aria-label="Station"><svg><use href="#gem"/></svg></button><button aria-label="Northing"><svg><use href="#gem"/></svg></button><button aria-label="Grid point"><svg><use href="#gem"/></svg></button><button aria-label="Point object"><svg><use href="#gem"/></svg></button><button aria-label="Bearing"><svg><use href="#spline"/></svg></button><button class="red" aria-label="Pipe"><svg><use href="#pflag"/></svg></button><i class="hsep"></i><button aria-label="Surface point"><svg><use href="#gem"/></svg></button><i class="hsep"></i><button aria-label="Resume"><svg><use href="#hook"/></svg></button><button aria-label="Curve"><svg><use href="#earc"/></svg></button><button aria-label="Up"><svg><use href="#insert"/></svg></button><i class="hsep"></i><button aria-label="Distance"><svg><use href="#dim"/></svg></button><button aria-label="Angle"><svg><use href="#dimcorner"/></svg></button><button aria-label="List"><svg><use href="#block"/></svg></button><button aria-label="Slope"><svg><use href="#zoomprev"/></svg></button><button aria-label="Cogo"><svg><use href="#globe"/></svg></button><button aria-label="Pen"><svg><use href="#erase"/></svg></button>
        </div>
        <div class="vbar v-3"><button aria-label="Point one"><svg><use href="#gem"/></svg></button><button aria-label="Point two"><svg><use href="#gem"/></svg></button><button aria-label="Point three"><svg><use href="#order"/></svg></button></div>
      </div>
      <div class="cmd"><div class="grip"></div><div class="cmdtext"><p>Select lines/arcs or polylines to create alignment:</p><p>Press enter to accept alignment direction or [Reverse]:</p><input type="text" aria-label="Command"></div></div>
    </div>
  </section>

  <footer class="status">
    <span class="coord">153701.6375, 346101.0318, 0.0000</span>
    <div class="sgroup toggles"><button aria-label="Infer"><svg><use href="#move"/></svg></button><button aria-label="Snap"><svg><use href="#snap"/></svg></button><button aria-label="Grid"><svg><use href="#dotgrid"/></svg></button><button aria-label="Ortho"><svg><use href="#dimcorner"/></svg></button><button aria-label="Polar"><svg><use href="#mirror"/></svg></button><button aria-label="Object snap"><svg><use href="#new"/></svg></button><button aria-label="3D snap"><svg><use href="#new"/></svg></button><button class="lit" aria-label="Tracking"><svg><use href="#mirror"/></svg></button><button class="lit" aria-label="Dynamic UCS"><svg><use href="#dimcorner"/></svg></button><button class="lit" aria-label="Dynamic input"><svg><use href="#offset"/></svg></button><button aria-label="Lineweight"><svg><use href="#move"/></svg></button><button class="lit" aria-label="Transparency"></button><button aria-label="Quick properties"><svg><use href="#calc"/></svg></button><button aria-label="Cycling"><svg><use href="#copyobj"/></svg></button></div>
    <span class="grow"></span>
    <div class="sgroup"><button class="model">MODEL</button><button aria-label="Model view"><svg class="navy"><use href="#grid"/></svg></button><button class="wh" aria-label="Layout"><svg><use href="#line"/></svg></button><button class="wh" aria-label="Layouts"><svg><use href="#copy"/></svg></button><button class="wh" aria-label="Drawings"><svg><use href="#assembly"/></svg></button></div>
    <div class="sgroup g2"><button class="scalebtn"><svg><use href="#extend"/></svg>1:1_1<svg class="car"><use href="#down"/></svg></button><button class="wh" aria-label="Annotation"><svg><use href="#edit"/></svg></button><button class="wh" aria-label="Auto scale"><svg><use href="#mirror"/></svg></button></div>
    <div class="sgroup g3s"><button class="wh" aria-label="Workspace"><svg><use href="#sun"/></svg></button><button class="wh" aria-label="Lock"><svg><use href="#lock"/></svg></button><button class="wh" aria-label="Hardware"><svg><use href="#layerset"/></svg></button></div>
    <div class="sgroup g4s"><button aria-label="Tray"><svg><use href="#brush"/></svg></button><button aria-label="Isolate"><svg><use href="#bulb"/></svg></button></div>
    <div class="sgroup g5s"><svg class="car"><use href="#down"/></svg><button class="wh" aria-label="Clean screen"><svg><use href="#max"/></svg></button></div>
    <svg class="resize"><use href="#resize"/></svg>
  </footer>

  <form class="dialog">
    <div class="dtitle"><svg viewBox="0 0 16 16"><path d="M1 2h12v12H1z" fill="#d8c8c8"/><path d="M3 2h5l1 6 5 3v3H2z" fill="#a01f28"/><path d="M3 10l5 4H2z" fill="#222"/></svg><h2>Create Alignment from Objects</h2><button type="button" class="dclose" aria-label="Close"><svg><use href="#close"/></svg></button></div>
    <div class="dbody">
      <div class="fld"><label for="nm">Name:</label><div class="row"><div class="namebox"><input type="text" id="nm" value="a"><i class="caret"></i></div><button type="button" class="btn sq" aria-label="Name template"><svg><use href="#namepick"/></svg></button></div></div>
      <div class="fld"><label for="ty">Type:</label><div class="dd grey"><svg><use href="#align"/></svg><select id="ty"><option>Centerline</option></select><svg class="car"><use href="#down"/></svg></div></div>
      <div class="fld"><label for="ds">Description:</label><div class="area"><textarea id="ds"></textarea><span class="scroll"><svg><use href="#up"/></svg><svg><use href="#down"/></svg></span></div></div>
      <div class="station"><label for="ss">Starting station:</label><input type="text" id="ss" value="0+00.00m"></div>
      <div class="tabs"><button type="button" class="on">General</button><button type="button">Design Criteria</button></div>
      <div class="pane">
        <div class="fld tight"><label for="si">Site:</label><div class="row"><div class="dd"><svg><use href="#site"/></svg><select id="si"><option>&lt;None&gt;</option></select><svg class="car"><use href="#down"/></svg></div><button type="button" class="btn split" aria-label="Create site"><svg><use href="#newsite"/></svg><svg class="car"><use href="#down"/></svg></button></div></div>
        <div class="fld"><label for="st">Alignment style:</label><div class="row"><div class="dd"><svg><use href="#alignstyle"/></svg><select id="st"><option>ΑΞΟΝΑΣ</option></select><svg class="car"><use href="#down"/></svg></div><button type="button" class="btn split" aria-label="Edit style"><svg><use href="#stylebtn"/></svg><svg class="car"><use href="#down"/></svg></button><button type="button" class="btn sq" aria-label="Pick style"><svg><use href="#stylepick"/></svg></button></div></div>
        <div class="fld"><label for="la">Alignment layer:</label><div class="row"><input type="text" id="la" value="0" readonly><button type="button" class="btn sq" aria-label="Pick layer"><svg><use href="#layerset"/></svg></button></div></div>
        <div class="fld"><label for="ls">Alignment label set:</label><div class="row"><div class="dd"><svg><use href="#labelset"/></svg><select id="ls"><option>Agogos</option></select><svg class="car"><use href="#down"/></svg></div><button type="button" class="btn split" aria-label="Edit label set"><svg><use href="#stylebtn"/></svg><svg class="car"><use href="#down"/></svg></button><button type="button" class="btn sq" aria-label="Pick label set"><svg><use href="#stylepick"/></svg></button></div></div>
        <fieldset><legend>Conversion options</legend>
          <label class="chk"><input type="checkbox" checked>Add curves between tangents</label>
          <div class="radius"><label for="ra">Default radius:</label><input type="text" id="ra" value="200.000m"></div>
          <label class="chk"><input type="checkbox" checked>Erase existing entities</label>
        </fieldset>
      </div>
      <div class="actions"><button type="button" class="ok">OK</button><button type="button">Cancel</button><button type="button">Help</button></div>
    </div>
  </form>
</main>
</body>
</html>
```
FILE: styles.css
```css
*{box-sizing:border-box}
html,body{height:100%}
body{margin:0;padding:16px 0;background:#000;font:9px/12px "Open Sans","Noto Sans",sans-serif;color:#333}
button,input,select,textarea{font:inherit;color:inherit;margin:0;padding:0;border:0;background:none;border-radius:0;outline:0}
select{appearance:none;min-width:0;flex:1;line-height:12px}
input,textarea{min-width:0}
textarea{resize:none}
ul{list-style:none;margin:0;padding:0}
p,h1,h2{margin:0;font:inherit}
svg{width:14px;height:14px;flex:none;fill:none;stroke:currentColor;display:block}
svg.car{width:6px;height:6px}
.sprite{position:absolute;width:0;height:0}
.grow{flex:1}
.off{color:#b4b4b4}
button{display:flex;align-items:center;justify-content:center;white-space:nowrap}

.app{position:relative;height:100%;display:flex;flex-direction:column;background:#646464;overflow:hidden}

/* title bar and ribbon tabs */
.head{display:grid;grid-template-columns:40px 1fr;grid-template-rows:24px 15px;background:linear-gradient(#a4a4a4 0,#8e8e8e 6px,#5c5c5c 24px,#3d3d3d 24px)}
.appbtn{grid-row:1/3;margin:4px 5px 3px 4px;background:linear-gradient(#e2e2e2,#a2a2a2 60%,#6e6e6e)}
.logo{width:29px;height:31px;stroke:none}
.logo text{font-size:8px;fill:#333}
.titlebar{display:grid;grid-template-columns:15fr auto 16fr;align-items:center;padding:0 4px 0 0;gap:8px;color:#f2f2f2}
.quick,.info{display:flex;align-items:center}
.quick button{width:19px}
.quick svg{width:12px;height:12px}
.quick .car,.info .car{width:6px;height:6px;margin:0 3px;color:#555}
.quick .dim{color:#bbb}
.quick .black,.info .black{color:#111}
.quick .wspace{display:flex;align-items:center;width:141px;height:16px;background:#c0c0c0;border:1px solid #d0d0d0;color:#888;padding-left:3px;gap:2px;margin:0 5px 0 1px}
.wspace .car{color:#333;margin:0 1px}
.apptitle{color:#d8d8d8;white-space:nowrap}
.info{justify-content:flex-end}
.info button{width:19px}
.info button svg{width:12px;height:12px}
.search{width:142px;height:15px;background:#f6f6f6;color:#555;font-style:italic;padding:0 3px;margin-right:1px}
.search::placeholder{color:#777;opacity:1}
.info .helpbtn{width:11px;height:11px;border-radius:6px;background:#e8e8f4;color:#3c3c8c;font-weight:700;margin-left:14px}
.winbtns{display:flex;color:#333;margin-left:12px}
.info .winbtns button{width:14px}
.info .winbtns svg{width:10px;height:10px}
.menu{display:flex;gap:1px;color:#e0e0e0}
.menu button{padding:0 8px}
.menu .on{background:#f2f2f2;color:#333}
.menu .mini{gap:3px;padding-left:17px}
.pill{width:10px;height:6px;background:#ddd;border-radius:2px}
.menu .mini .car{width:5px}

/* ribbon */
.ribbon{display:flex;height:79px;margin:0 4px;background:linear-gradient(#cbcbcb,#8d8d8d);border-bottom:1px solid #bbb;border-top:1px solid #e6e6e6;color:#bbb}
.panel{display:flex;flex-direction:column;flex:none;background:#fbfbfb;border-right:1px solid #d4d4d4}
.p-pal{width:92px}.p-gnd{width:109px}.p-des{width:258px}.p-prf{width:106px}.p-drw{width:86px}.p-mod{width:141px}.p-lay{width:171px}.p-clp{width:65px}
.body{flex:1;display:flex;min-height:0;padding:3px 0 2px 3px}
.ptitle{height:16px;background:#eee;color:#444;display:flex;justify-content:center;align-items:center;gap:5px;width:100%}
.ptitle.left{justify-content:flex-start;padding-left:4px}
.tspace{flex-direction:column;width:48px;background:#c3dcf4;border:1px solid #8fb3d9;gap:4px;color:#a9bccf;padding-bottom:6px}
.tspace svg{width:24px;height:24px;color:#a3b4c4}
.pal{display:grid;grid-template-columns:20px 20px;grid-auto-rows:19px}
.pal .sel{background:#cfe2f5;border:1px solid #9dbde0;color:#9fb4c9}
.pal button:nth-child(2n){border-left-color:#4f7cb3}
.cols{padding-left:4px}
.col{display:grid;grid-template-rows:repeat(3,19px);align-content:start}
.col button{justify-content:flex-start;gap:3px}
.col svg{width:12px;height:12px}
.col .car,.g3 .car,.g4 .car{width:5px;height:5px;color:#888;margin-left:2px}
.p-gnd .cols{padding-left:6px}
.p-des .cols{padding-left:7px}
.c1{width:85px}.c2{width:78px}
.p-prf .cols{padding-left:13px}
.g3{display:grid;grid-template-columns:28px 28px 20px;grid-auto-rows:19px;padding-left:6px}
.big{flex-direction:column;width:46px;justify-content:flex-start;gap:0}
.big svg:first-child{width:26px;height:27px;margin-bottom:3px}
.big .car{margin-top:3px;color:#888}
.g4{display:grid;grid-template-columns:18px 18px 22px 28px;grid-auto-rows:19px;margin-left:4px}
.g3 button,.g4 button,.g1 button{border:1px solid #eee}
.stack{flex-direction:column;gap:2px;padding-right:6px}
.licons{display:flex;height:18px;justify-content:space-between}
.rcombo{display:flex;align-items:center;height:17px;background:#f6f6f6;gap:3px;padding:0 2px}
.rcombo svg{width:12px;height:12px}
.rcombo .car{width:6px;height:6px;color:#555}
.sw{width:10px;height:10px;border:1px solid #999;flex:none}
.amber{background:#f5d27a;border-color:#c9a757;width:12px;height:12px}
.yellow{background:#e8c21c;border-color:#77661b;margin-left:2px}
.green{background:#18b51e;border-color:#176a19}
.p-clp .g1{display:grid;grid-auto-rows:19px;width:14px}

/* docked toolbars */
.bars{display:flex;flex-direction:column;gap:4px;padding:4px 10px 6px}
.barrow{display:flex;height:18px}
.bar{display:flex;align-items:center;background:#f0f0f0;flex:none;overflow:hidden;color:#666}
.bar button{width:18px}
.bar .car{margin:0 4px;width:5px;height:5px}
.bar .off{color:#b4b4b4}
.sep{width:1px;height:14px;background:#bbb;margin:0 3px;flex:none}
.bar .q{font-weight:700;font-size:11px;color:#555c85}
.b-std{width:640px;padding-left:1px}
.b-sty{width:347px;margin-left:4px;padding-left:135px}
.tcombo{display:flex;align-items:center;height:16px;background:#f8f8f8;gap:1px;color:#888}
.tcombo svg{width:12px;height:12px;color:#777}
.st1{width:95px;padding-left:4px}
.st2{width:91px;padding-left:10px}
.b-lay{width:313px}
.lay{width:250px;padding-left:2px}
.lay select{padding-left:7px}
.b-prp{width:446px;margin-left:11px;padding-left:2px}
.colr{width:116px;padding-left:1px;gap:4px}
.ltype{width:300px;border-top:1px solid #777;margin-left:4px}
.b-dim{width:235px;margin-left:21px}
.fx{font-style:italic;font-weight:700}

/* workspace */
.work{flex:1;display:flex;min-height:0;padding:0 4px}
.toolspace{display:flex;width:203px;flex:none;padding-bottom:2px}
.ts{width:186px;display:flex;flex-direction:column;background:#efefef}
.tshead{height:17px;background:#a5a5a5;border-top:1px solid #bbb;padding:2px 9px;color:#444}
.tstools{display:flex;align-items:center;height:23px;gap:8px;padding:0 4px 0 2px}
.tstools button{width:14px}
.tstools .thelp{width:13px;height:13px;border:1px solid #777;font-weight:700}
.tscombo{display:flex;align-items:center;height:18px;background:linear-gradient(#f0f0f0,#cfcfcf);border:1px solid #b5b5b5;padding:0 4px 0 2px}
.tree{background:#fff;height:310px;border-bottom:1px solid #bbb;overflow:hidden;margin-top:2px}
.node{display:flex;align-items:center;height:16px;gap:5px;white-space:nowrap}
.node.root{padding-left:6px}
.node .ex{width:9px;height:9px;flex:none;color:#999}
.node svg{color:#666}
.tree ul{margin-left:10px;border-left:1px dotted #ccc}
.tree ul .node{padding-left:11px;gap:4px}
.tslower{flex:1;border-top:1px solid #ccc;margin-top:4px}
.tstabs{width:16px;padding-top:18px;display:grid;grid-auto-rows:97px;align-content:start}
.tstabs button{writing-mode:vertical-rl;rotate:180deg;background:#bcbcbc;border-top:1px solid #777;width:16px}
.tstabs .on{background:#efefef}

.right{flex:1;min-width:0;display:flex;flex-direction:column}
.stage{flex:1;min-height:0;display:flex}
.vbar{display:grid;grid-auto-rows:1fr;width:18px;background:#f0f0f0;flex:none;margin-top:5px;color:#6e6e6e}
.vbar button{width:18px;min-height:0}
.v-draw{width:19px;height:354px;margin-left:4px;margin-right:6px}
.vbar .mtext{font:700 14px/16px "Liberation Sans",sans-serif;color:#333}
.v-mod{height:300px}
.v-mod button{color:#58758a}
.v-ord{height:113px;margin-top:7px}
.v-ord,.v-geo{display:flex;flex-direction:column}
.v-ord button,.v-geo button{flex:1}
.hsep{height:1px;background:#bbb;margin:1px 2px}
.vcol{margin-left:6px;margin-right:5px;width:18px}
.v-geo{height:420px;margin-right:5px}
.teal{color:#3b8a78}.red{color:#a05555}
.v-3{height:53px;margin-right:2px}
.canvas{position:relative;flex:1;min-width:0;background:#20262e;border-right:2px solid #999;border-bottom:1px solid #999;margin-bottom:4px}
.vcol{margin-left:5px}
.drawing{width:100%;height:100%}
.cube{font:700 11px "Liberation Sans",sans-serif;text-anchor:middle}
.cube circle{stroke:#50565d;stroke-width:5}
.cube .face{fill:#a9abad;stroke:#c0c2c4}
.cube text{fill:#b7bbc0;stroke:none}
.cube .top{font-size:7px;fill:#555}
.cube .south{fill:#7fd3da}
.cube .wcs{fill:#b5c3c6;stroke:none}
.cube .wcst{font-size:7px;fill:#8d999b}
.vlabel{position:absolute;left:4px;top:4px;color:#dcdcdc}
.vwin{position:absolute;right:3px;top:6px;display:flex;color:#ddd}
.vwin button{width:16px}
.vwin svg{width:10px;height:10px}

.cmd{display:flex;height:46px;flex:none;margin-left:2px}
.grip{width:12px;border:2px solid #999;border-right-color:#777;background:#858585}
.cmdtext{flex:1;background:#c8c8ca;display:flex;flex-direction:column;padding-left:4px;font:9px/12px "DejaVu Sans Mono",monospace;color:#444;padding-top:1px}
.cmdtext input{margin:auto 0 0 -4px;height:12px;background:#fff}

/* status bar */
.status{display:flex;align-items:center;height:22px;flex:none;padding:0 2px 0 0;background:linear-gradient(#707070,#989898);color:#333}
.coord{width:163px;padding-left:13px;color:#2c2c2c;white-space:nowrap;font-family:"Liberation Sans",sans-serif}
.sgroup{display:flex;align-items:center;background:#a9a9a9;height:18px}
.sgroup button{width:17px;height:18px;border-right:1px solid #999;background:#adadad;flex:none}
.toggles button{width:18px;background:#b9b9b9}
.sgroup svg{width:12px;height:12px}
.sgroup .car{width:6px;height:6px}
.sgroup .lit{background:#9edcf0}
.sgroup .model{width:33px}
.sgroup .wh{color:#e8e8e8}
.navy{color:#24314f}
.g2{margin-left:12px}.g3s{margin-left:7px}.g4s{margin-left:7px}.g5s{margin-left:7px;padding-left:2px}
.sgroup .scalebtn{width:48px;gap:2px}
.scalebtn svg{color:#e8e8e8}
.scalebtn .car{color:#333}
.status .resize{width:12px;height:12px;color:#b5b5b5;margin-left:3px}

/* dialog window */
.dialog{position:absolute;left:491px;top:107px;width:298px;background:#efefef;border:1px solid #4f6f86;border-right:3px solid #8fd4e6;border-bottom:2px solid #7ecbd6;border-radius:5px 5px 0 0;font:9px/13px "Liberation Sans",sans-serif;color:#444}
.dtitle{display:flex;align-items:center;height:19px;gap:5px;padding:0 1px 0 3px;background:linear-gradient(#cfdcea,#9db9d8 40%,#bccfe6);border-radius:4px 4px 0 0;color:#33475f;font-family:"Open Sans",sans-serif}
.dtitle>svg{stroke:none;width:12px;height:12px}
.dtitle h2{flex:1;font-size:9px}
.dclose{width:25px;height:13px;background:linear-gradient(#d9917f,#c04a30);border:1px solid #8c4a3d;color:#fff}
.dclose svg{width:8px;height:8px}
.dbody{padding:6px 1px 10px 7px}
.fld{margin:0 1px 7px 4px}
.fld label{display:block;height:13px}
.row{display:flex;align-items:center;height:17px;gap:6px}
.fld input,.dd{flex:1;height:17px;display:flex;align-items:center}
.fld input{background:#fff;border:1px solid #a9c7dd;padding-left:5px}
.namebox{position:relative;flex:1;display:flex}
.caret{position:absolute;left:12px;top:4px;width:1px;height:9px;background:#222}
.dd{background:#fff;gap:4px;padding:0 4px 0 1px;min-width:0}
.dd svg{width:13px;height:13px;color:#666}
.dd .car,.split .car{width:6px;height:6px;color:#222}
.grey{background:linear-gradient(#e9e9e9,#cdcdcd);border:1px solid #a3a3a3;padding-left:3px;gap:1px}
.btn{height:18px;border:1px solid #999;background:#ddd;border-radius:2px;gap:3px;flex:none}
.sq{width:19px}
.split{width:30px}
.area{display:flex;height:36px;background:#fff;margin-bottom:-1px}
.area textarea{flex:1}
.scroll{width:14px;background:#efefef;display:flex;flex-direction:column;justify-content:space-between;padding:5px 4px;color:#999}
.scroll svg{width:6px;height:6px}
.station{display:flex;justify-content:flex-end;align-items:center;gap:7px;margin-right:2px;height:16px}
.station input{width:61px;height:15px;background:#fff;padding-left:4px}
.tabs{display:flex;align-items:flex-end;height:17px}
.tabs button{height:14px;border:1px solid #bbb;border-bottom:0;background:#e0e0e0;padding:0 2px}
.tabs .on{height:17px;background:#f6f6f6;padding:0 5px}
.pane{border:1px solid #c4c4c4;border-right:0;padding:7px 8px 7px 6px;background:#f1f1f1}
.pane .fld{margin-right:0;margin-left:3px}
.pane .fld.tight{margin-bottom:2px}
.pane .fld input{background:#efefef;border-color:#ddd}
fieldset{margin:-3px 0 0 2px;border:1px solid #e2e2e2;padding:3px 15px 5px 10px;min-width:0}
legend{padding:0 3px;margin-left:-6px}
.chk{display:flex;align-items:center;gap:3px;height:16px}
.chk input{appearance:none;width:10px;height:10px;border:1px solid #999;background:#e6e6e6;display:grid;place-items:center}
.chk input:checked::after{content:"✓";font:9px/9px "DejaVu Sans",sans-serif;color:#445}
.radius{margin:4px 0 5px 18px}
.radius label{display:block;height:13px}
.radius input{display:block;width:100%;height:16px;background:#fff;padding-left:5px}
.actions{display:flex;justify-content:center;gap:6px;margin-top:11px;padding-left:14px}
.actions button{width:61px;height:18px;border:1px solid #999;border-radius:2px;background:linear-gradient(#f4f4f4,#d9d9d9)}
.actions .ok{border:2px solid #5ab0d0;background:linear-gradient(#eaf5fa,#c5e0ee)}
```
